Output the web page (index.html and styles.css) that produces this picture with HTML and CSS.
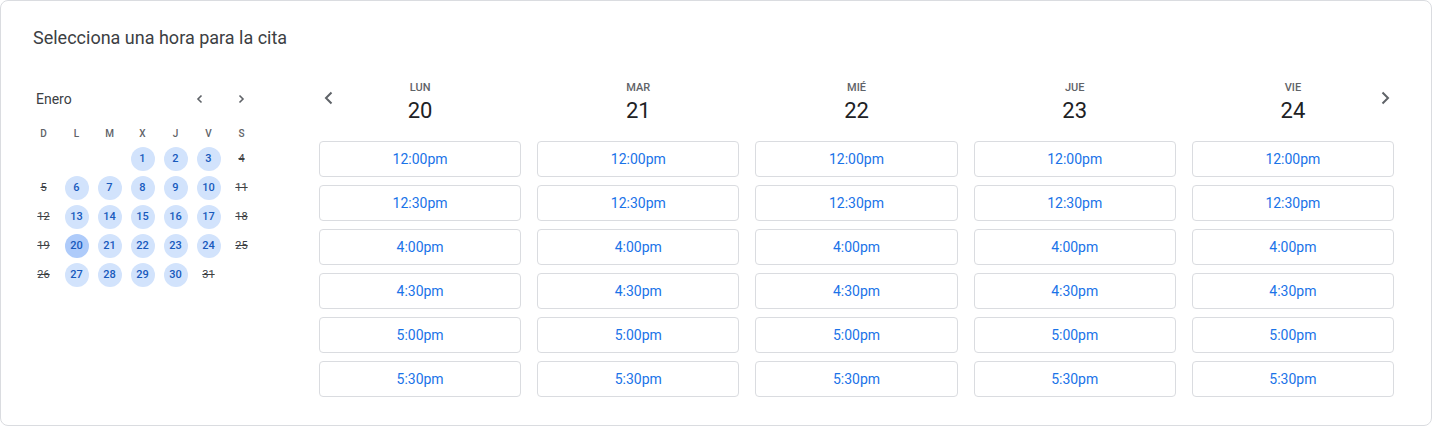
FILE: index.html
```html
<!DOCTYPE html>
<html lang="es">
<head>
<meta charset="utf-8">
<title>Selecciona una hora para la cita</title>
<link rel="stylesheet" href="styles.css">
</head>
<body>
<div class="card">
  <h1 class="title">Selecciona una hora para la cita</h1>
  <div class="body">
    <div class="mini">
      <div class="mini-head">
        <span class="month">Enero</span>
        <div class="mini-nav">
          <button class="mini-btn" aria-label="Mes anterior"><svg width="10" height="10" viewBox="0 0 10 10"><path d="M6.5 1.5 3 5l3.5 3.5" fill="none" stroke="#5f6368" stroke-width="1.6"/></svg></button>
          <button class="mini-btn" aria-label="Mes siguiente"><svg width="10" height="10" viewBox="0 0 10 10"><path d="M3.5 1.5 7 5 3.5 8.5" fill="none" stroke="#5f6368" stroke-width="1.6"/></svg></button>
        </div>
      </div>
      <div class="mini-grid">
        <span class="wd">D</span><span class="wd">L</span><span class="wd">M</span><span class="wd">X</span><span class="wd">J</span><span class="wd">V</span><span class="wd">S</span>
        <span class="d"></span><span class="d"></span><span class="d"></span>
        <span class="d av">1</span><span class="d av">2</span><span class="d av">3</span><span class="d off">4</span>
        <span class="d off">5</span><span class="d av">6</span><span class="d av">7</span><span class="d av">8</span><span class="d av">9</span><span class="d av">10</span><span class="d off">11</span>
        <span class="d off">12</span><span class="d av">13</span><span class="d av">14</span><span class="d av">15</span><span class="d av">16</span><span class="d av">17</span><span class="d off">18</span>
        <span class="d off">19</span><span class="d av sel">20</span><span class="d av">21</span><span class="d av">22</span><span class="d av">23</span><span class="d av">24</span><span class="d off">25</span>
        <span class="d off">26</span><span class="d av">27</span><span class="d av">28</span><span class="d av">29</span><span class="d av">30</span><span class="d off">31</span>
      </div>
    </div>
    <div class="week">
      <button class="week-nav prev" aria-label="Semana anterior"><svg width="16" height="16" viewBox="0 0 16 16"><path d="M10.5 2.5 5 8l5.5 5.5" fill="none" stroke="#5f6368" stroke-width="2"/></svg></button>
      <button class="week-nav next" aria-label="Semana siguiente"><svg width="16" height="16" viewBox="0 0 16 16"><path d="M5.5 2.5 11 8l-5.5 5.5" fill="none" stroke="#5f6368" stroke-width="2"/></svg></button>
      <div class="col">
        <div class="dname">LUN</div><div class="dnum">20</div>
        <button class="slot">12:00pm</button><button class="slot">12:30pm</button><button class="slot">4:00pm</button><button class="slot">4:30pm</button><button class="slot">5:00pm</button><button class="slot">5:30pm</button>
      </div>
      <div class="col">
        <div class="dname">MAR</div><div class="dnum">21</div>
        <button class="slot">12:00pm</button><button class="slot">12:30pm</button><button class="slot">4:00pm</button><button class="slot">4:30pm</button><button class="slot">5:00pm</button><button class="slot">5:30pm</button>
      </div>
      <div class="col">
        <div class="dname">MIÉ</div><div class="dnum">22</div>
        <button class="slot">12:00pm</button><button class="slot">12:30pm</button><button class="slot">4:00pm</button><button class="slot">4:30pm</button><button class="slot">5:00pm</button><button class="slot">5:30pm</button>
      </div>
      <div class="col">
        <div class="dname">JUE</div><div class="dnum">23</div>
        <button class="slot">12:00pm</button><button class="slot">12:30pm</button><button class="slot">4:00pm</button><button class="slot">4:30pm</button><button class="slot">5:00pm</button><button class="slot">5:30pm</button>
      </div>
      <div class="col">
        <div class="dname">VIE</div><div class="dnum">24</div>
        <button class="slot">12:00pm</button><button class="slot">12:30pm</button><button class="slot">4:00pm</button><button class="slot">4:30pm</button><button class="slot">5:00pm</button><button class="slot">5:30pm</button>
      </div>
    </div>
  </div>
</div>
</body>
</html>
```
FILE: styles.css
```css
* { box-sizing: border-box; }
html, body { margin: 0; padding: 0; background: #fff; }
body { font-family: Roboto, "Liberation Sans", sans-serif; color: #3c4043; }
button { font-family: inherit; cursor: pointer; }

.card {
  width: 1432px;
  height: 426px;
  border: 1px solid #dadce0;
  border-radius: 8px;
  background: #fff;
}
.title {
  margin: 0;
  padding: 25px 0 0 32px;
  font-size: 18px;
  line-height: 24px;
  font-weight: 400;
  color: #3c4043;
}
.body {
  display: flex;
  gap: 61px;
  padding: 20px 0 0 26px;
}

/* mini calendar */
.mini { width: 231px; flex: none; padding-top: 13px; }
.mini-head {
  display: flex;
  align-items: center;
  justify-content: space-between;
  height: 32px;
  padding-left: 9px;
  padding-right: 5px;
}
.month { font-size: 14px; font-weight: 400; color: #3c4043; }
.mini-nav { display: flex; gap: 17px; }
.mini-btn {
  width: 24px; height: 24px;
  border: 0; background: none; padding: 0;
  display: flex; align-items: center; justify-content: center;
}
.mini-grid {
  margin-top: 7px;
  display: grid;
  grid-template-columns: repeat(7, 33px);
  grid-auto-rows: 29px;
  grid-template-rows: 22px;
}
.wd {
  display: flex; align-items: center; justify-content: center;
  font-size: 10px; font-weight: 500; color: #5f6368;
}
.d {
  display: flex; align-items: center; justify-content: center;
  font-size: 11px; color: #3c4043;
}
.d.off { text-decoration: line-through; color: #3c4043; }
.d.av {
  width: 24px; height: 24px; margin: auto;
  border-radius: 50%;
  background: #d2e3fc;
  color: #185abc;
  font-weight: 500;
}
.d.sel { background: #aecbfa; }

/* week */
.week {
  position: relative;
  width: 1075px;
  flex: none;
  display: grid;
  grid-template-columns: repeat(5, 1fr);
  column-gap: 16px;
  padding-top: 10px;
}
.week-nav {
  position: absolute;
  top: 16px;
  width: 24px; height: 24px;
  border: 0; background: none; padding: 0;
  display: flex; align-items: center; justify-content: center;
}
.week-nav.prev { left: -2px; }
.week-nav.next { right: -3px; }
.col { display: flex; flex-direction: column; align-items: stretch; }
.dname {
  text-align: center;
  font-size: 11px; line-height: 16px; font-weight: 500;
  color: #5f6368;
}
.dnum {
  text-align: center;
  font-size: 22px; line-height: 28px; font-weight: 400;
  color: #202124;
  margin-top: 1px;
  margin-bottom: 16px;
}
.slot {
  height: 36px;
  margin-bottom: 8px;
  border: 1px solid #dadce0;
  border-radius: 4px;
  background: #fff;
  color: #1a73e8;
  font-size: 14px;
  font-weight: 400;
  padding: 0;
}
```
